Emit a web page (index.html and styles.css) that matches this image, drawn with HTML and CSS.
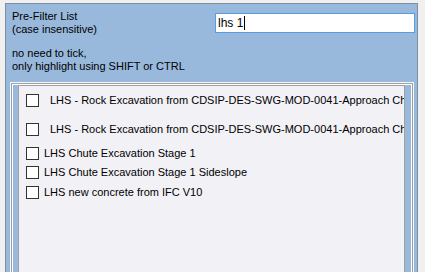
FILE: index.html
```html
<!DOCTYPE html>
<html lang="en">
<head>
  <meta charset="UTF-8">
  <title>Pre-Filter List</title>
  <link rel="stylesheet" href="styles.css">
</head>
<body>
  <div class="panel">
    <div class="filter-row">
      <div class="filter-label">Pre-Filter List<br>(case insensitive)</div>
      <div class="textbox">lhs 1<span class="caret"></span></div>
    </div>
    <p class="hint">no need to tick,<br>only highlight using SHIFT or CTRL</p>

    <div class="group">
      <ul class="checklist">
        <li class="item tall"><span class="box"></span><span class="text">LHS - Rock Excavation from CDSIP-DES-SWG-MOD-0041-Approach Channel</span></li>
        <li class="item tall"><span class="box"></span><span class="text">LHS - Rock Excavation from CDSIP-DES-SWG-MOD-0041-Approach Channel</span></li>
        <li class="item"><span class="box"></span><span class="text">LHS Chute Excavation Stage 1</span></li>
        <li class="item"><span class="box"></span><span class="text">LHS Chute Excavation Stage 1 Sideslope</span></li>
        <li class="item"><span class="box"></span><span class="text">LHS new concrete from IFC V10</span></li>
      </ul>
    </div>
  </div>
</body>
</html>
```

FILE: styles.css
```css
html, body { height:100%; }
body { margin:0; background:#f0f0f0; overflow:hidden; font-family:"Liberation Sans", Arial, sans-serif; font-size:11px; line-height:13px; color:#000; }

.panel { box-sizing:border-box; width:413px; height:calc(100vh + 20px); margin:3px 0 0 5px; padding:6px 2px 0 2px; background:#98b9dc; border:1px solid #7f8fa0; }

.filter-row { display:flex; align-items:flex-start; }
.filter-label { padding-left:4px; white-space:nowrap; }
.textbox { box-sizing:border-box; width:200px; height:20px; margin:3px 0 0 auto; padding:2px 0 0 2px; background:#fff; border:1px solid #569de5; line-height:15px; font-size:12px; }
.caret { display:inline-block; width:1px; height:14px; margin-left:1px; vertical-align:-3px; background:#000; }

.hint { margin:11px 0 0; padding-left:4px; }

/* etched frame: border + two inset rings */
.group { box-sizing:border-box; width:404px; height:calc(100vh); margin:9px 0 0 2px; padding:2px 8px 0 7px; border:1px solid #f5f7fa; box-shadow:inset 0 0 0 1px #a0a0a0, inset 0 0 0 2px #fff; }

.checklist { list-style:none; margin:0; padding:0 0 0 7px; height:100%; background:#f2f1f6; border:1px solid #a0a0a0; overflow:hidden; }
.item { display:flex; align-items:center; height:19px; white-space:nowrap; }
.item.tall { height:29px; }
.item:last-child { height:20px; }
.box { flex:none; box-sizing:border-box; width:13px; height:13px; background:#fff; border:1px solid #333; }
.text { margin-left:5px; }
.tall .text { margin-left:11px; }
```
